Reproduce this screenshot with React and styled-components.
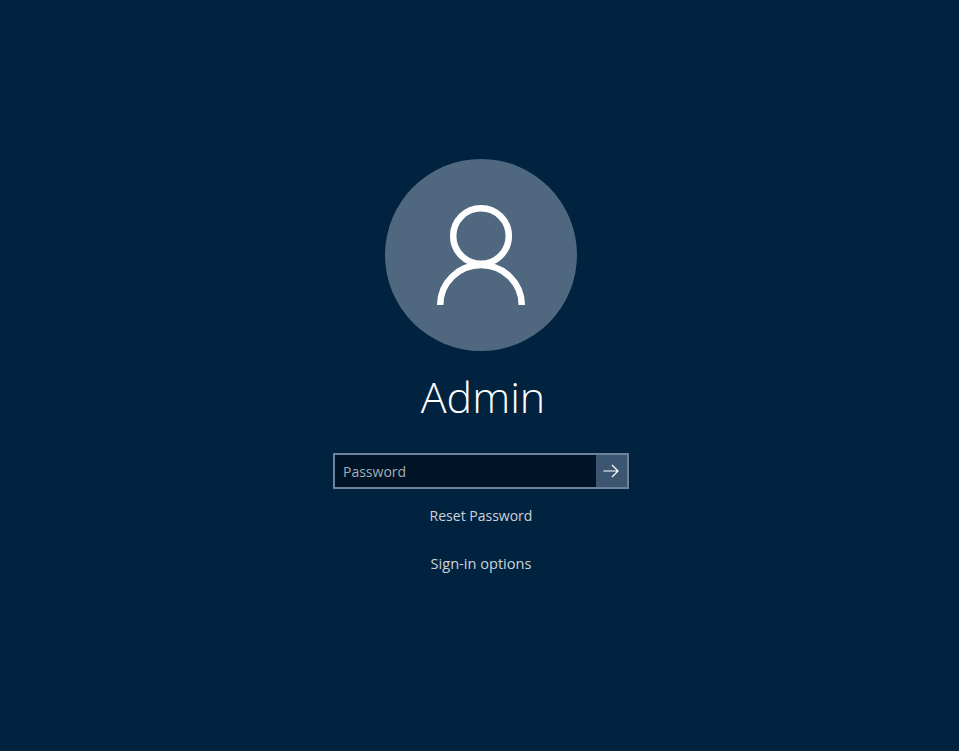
import React from 'react';
import styled, { createGlobalStyle } from 'styled-components';

const GlobalStyle = createGlobalStyle`
  html, body {
    margin: 0;
    height: 100%;
    background: #012340;
  }
`;

const Screen = styled.div`
  box-sizing: border-box;
  width: 100%;
  height: 751px;
  overflow: hidden;
  padding: 159px 0 0 3px;
  display: flex;
  flex-direction: column;
  align-items: center;
  background: #012340;
  font-family: 'Open Sans', 'Noto Sans', sans-serif;
`;

const Avatar = styled.div`
  width: 192px;
  height: 192px;
  flex: none;
  border-radius: 50%;
  background: #4f677f;
`;

const UserName = styled.h1`
  margin: 15px 0 0;
  padding-left: 4px;
  height: 62px;
  line-height: 62px;
  font-size: 43px;
  font-weight: 300;
  color: #ffffff;
`;

const PasswordForm = styled.form`
  box-sizing: border-box;
  width: 296px;
  height: 36px;
  margin-top: 25px;
  display: flex;
  border: 2px solid #6d8298;
`;

const PasswordInput = styled.input`
  flex: 1;
  min-width: 0;
  border: none;
  outline: none;
  padding: 0 8px;
  background: #001428;
  color: #ffffff;
  font-family: inherit;
  font-size: 14px;

  &::placeholder {
    color: #a4acb4;
    opacity: 1;
  }
`;

const SubmitButton = styled.button`
  width: 31px;
  flex: none;
  padding: 0 2px 0 0;
  border: none;
  display: flex;
  align-items: center;
  justify-content: center;
  background: #3c5570;
`;

const TextLink = styled.a`
  margin-top: ${(props) => props.$gap}px;
  height: 24px;
  line-height: 24px;
  font-size: ${(props) => props.$size}px;
  color: #ccd3da;
  cursor: pointer;
`;

function UserIcon() {
  return (
    <svg width="192" height="192" viewBox="0 0 192 192" fill="none" stroke="#fff" strokeWidth="6.5">
      <circle cx="96" cy="77" r="27.8" />
      <path d="M55.2 146 A40.8 40 0 0 1 136.8 146" />
    </svg>
  );
}

function ArrowIcon() {
  return (
    <svg width="16" height="14" viewBox="0 0 16 14" fill="none" stroke="#fff" strokeWidth="1.2">
      <path d="M0.5 7H15M9 1l6 6-6 6" />
    </svg>
  );
}

function App() {
  return (
    <>
      <GlobalStyle />
      <Screen>
        <Avatar>
          <UserIcon />
        </Avatar>
        <UserName>Admin</UserName>
        <PasswordForm onSubmit={(e) => e.preventDefault()}>
          <PasswordInput type="password" placeholder="Password" />
          <SubmitButton type="submit">
            <ArrowIcon />
          </SubmitButton>
        </PasswordForm>
        <TextLink $gap={15} $size={14}>Reset Password</TextLink>
        <TextLink $gap={23} $size={14.6}>Sign-in options</TextLink>
      </Screen>
    </>
  );
}

export default App;
